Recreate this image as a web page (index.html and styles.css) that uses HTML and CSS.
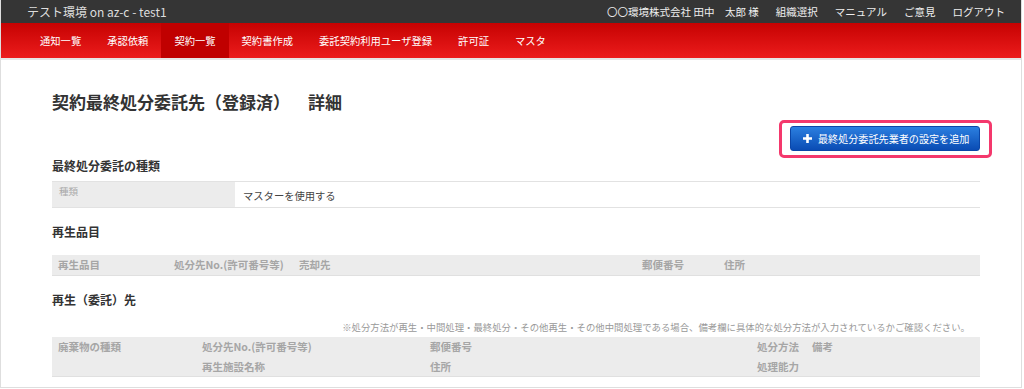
FILE: index.html
```html
<!DOCTYPE html>
<html lang="ja">

<head>
    <meta charset="UTF-8">
    <meta name="viewport" content="width=device-width, initial-scale=1.0">
    <title>契約最終処分委託先（登録済） 詳細</title>
    <link rel="stylesheet" href="styles.css">
</head>

<body>
    <div class="frame">
        <header class="topbar">
            <div class="site-title">テスト環境 on az-c - test1</div>
            <ul class="user-menu">
                <li>〇〇環境株式会社 田中　太郎 様</li>
                <li>組織選択</li>
                <li>マニュアル</li>
                <li>ご意見</li>
                <li>ログアウト</li>
            </ul>
        </header>
        <nav class="gnav">
            <ul>
                <li>通知一覧</li>
                <li>承認依頼</li>
                <li class="active">契約一覧</li>
                <li>契約書作成</li>
                <li>委託契約利用ユーザ登録</li>
                <li>許可証</li>
                <li>マスタ</li>
            </ul>
        </nav>

        <div class="content">
            <h1 class="page-title">契約最終処分委託先（登録済）<span class="sub">詳細</span></h1>

            <div class="actions">
                <div class="btn-wrap">
                    <a class="btn-add" href="#">
                        <svg class="icon-plus" width="9" height="9" viewBox="0 0 9 9">
                            <path d="M3.2 0h2.6v3.2H9v2.6H5.8V9H3.2V5.8H0V3.2h3.2z" fill="#fff" />
                        </svg>
                        最終処分委託先業者の設定を追加
                    </a>
                    <span class="mark"></span>
                </div>
            </div>

            <h2 class="section-title first">最終処分委託の種類</h2>
            <table class="detail">
                <tr>
                    <th>種類</th>
                    <td>マスターを使用する</td>
                </tr>
            </table>

            <h2 class="section-title">再生品目</h2>
            <table class="list list-item">
                <colgroup>
                    <col class="w116">
                    <col class="w125">
                    <col class="w343">
                    <col class="w82">
                    <col>
                </colgroup>
                <tr>
                    <th>再生品目</th>
                    <th>処分先No.(許可番号等)</th>
                    <th>売却先</th>
                    <th>郵便番号</th>
                    <th>住所</th>
                </tr>
            </table>

            <h2 class="section-title">再生（委託）先</h2>
            <p class="note">※処分方法が再生・中間処理・最終処分・その他再生・その他中間処理である場合、備考欄に具体的な処分方法が入力されているかご確認ください。</p>
            <table class="list list-dest">
                <colgroup>
                    <col class="w144">
                    <col class="w228">
                    <col class="w327">
                    <col class="w55">
                    <col>
                </colgroup>
                <tr>
                    <th>廃棄物の種類</th>
                    <th>処分先No.(許可番号等)</th>
                    <th>郵便番号</th>
                    <th>処分方法</th>
                    <th>備考</th>
                </tr>
                <tr>
                    <th></th>
                    <th>再生施設名称</th>
                    <th>住所</th>
                    <th>処理能力</th>
                    <th></th>
                </tr>
            </table>
        </div>
    </div>
</body>

</html>
```

FILE: styles.css
```css
* {
    padding: 0;
    margin: 0;
    box-sizing: border-box;
}

body {
    background-color: #fff;
    font-family: "Noto Sans CJK JP", "Noto Sans", sans-serif;
    color: #333;
}

ul {
    list-style: none;
}

.frame {
    width: 1022px;
    height: 388px;
    border: 1px solid #dedede;
    border-top: none;
    overflow: hidden;
}

/* 上部バー */
.topbar {
    display: flex;
    align-items: center;
    justify-content: space-between;
    height: 23px;
    padding: 0 16px 0 26px;
    background-color: #353535;
}

.site-title {
    font-size: 12px;
    color: #ddd;
}

.user-menu {
    display: flex;
    gap: 17px;
}

.user-menu li {
    font-size: 10.5px;
    color: #eee;
}

/* グローバルナビ */
.gnav {
    height: 37px;
    background: linear-gradient(#c60202, #ec1c1c);
    border-bottom: 2px solid #e6e6e6;
}

.gnav ul {
    display: flex;
    height: 35px;
    padding-left: 26px;
}

.gnav li {
    display: flex;
    align-items: center;
    padding: 0 13px;
    font-size: 10.3px;
    color: #fff;
}

.gnav li.active {
    background-color: #c00000;
}

/* 本文 */
.content {
    padding: 30px 41px 0 51px;
}

.page-title {
    font-size: 17px;
    line-height: 24px;
    font-weight: bold;
    color: #333;
}

.page-title .sub {
    margin-left: 18px;
}

.actions {
    display: flex;
    justify-content: flex-end;
    margin-top: 12px;
}

.btn-wrap {
    position: relative;
}

.btn-add {
    display: flex;
    align-items: center;
    gap: 6px;
    width: 190px;
    height: 25px;
    padding-left: 12px;
    border: 1px solid #0a46a8;
    border-radius: 3px;
    background: linear-gradient(#2b7fe0, #0a4cb4);
    color: #fff;
    font-size: 10.1px;
    text-decoration: none;
}

.icon-plus {
    flex-shrink: 0;
}

/* 注目枠 */
.mark {
    position: absolute;
    top: -6px;
    bottom: -7px;
    left: -11px;
    right: -12px;
    border: 3px solid #f4386c;
    border-radius: 5px;
}

.section-title {
    margin-top: 15px;
    font-size: 12px;
    line-height: 18px;
    font-weight: bold;
    color: #333;
}

.section-title.first {
    margin-top: 6px;
}

table {
    width: 100%;
    border-collapse: collapse;
    table-layout: fixed;
}

.detail {
    margin-top: 6px;
    border-top: 1px solid #e2e2e2;
    border-bottom: 1px solid #e2e2e2;
}

.detail th {
    width: 183px;
    height: 26px;
    padding: 2px 7px 0;
    vertical-align: top;
    text-align: left;
    background-color: #ececec;
    font-size: 9.5px;
    font-weight: normal;
    color: #aaa;
}

.detail td {
    padding: 2px 8px 0;
    font-size: 10.3px;
    color: #444;
}

.list {
    background-color: #ececec;
    border-bottom: 1px solid #e0e0e0;
}

.list-item {
    margin-top: 14px;
}

.list th {
    height: 20px;
    padding: 0 0 0 6px;
    text-align: left;
    font-size: 10.5px;
    font-weight: bold;
    color: #a6a6a6;
    white-space: nowrap;
}

.note {
    margin: 11px 10px 3px 0;
    text-align: right;
    font-size: 9.4px;
    line-height: 14px;
    color: #999;
}

.w116 { width: 116px; }
.w125 { width: 125px; }
.w343 { width: 343px; }
.w82 { width: 82px; }
.w144 { width: 144px; }
.w228 { width: 228px; }
.w327 { width: 327px; }
.w55 { width: 55px; }
```
